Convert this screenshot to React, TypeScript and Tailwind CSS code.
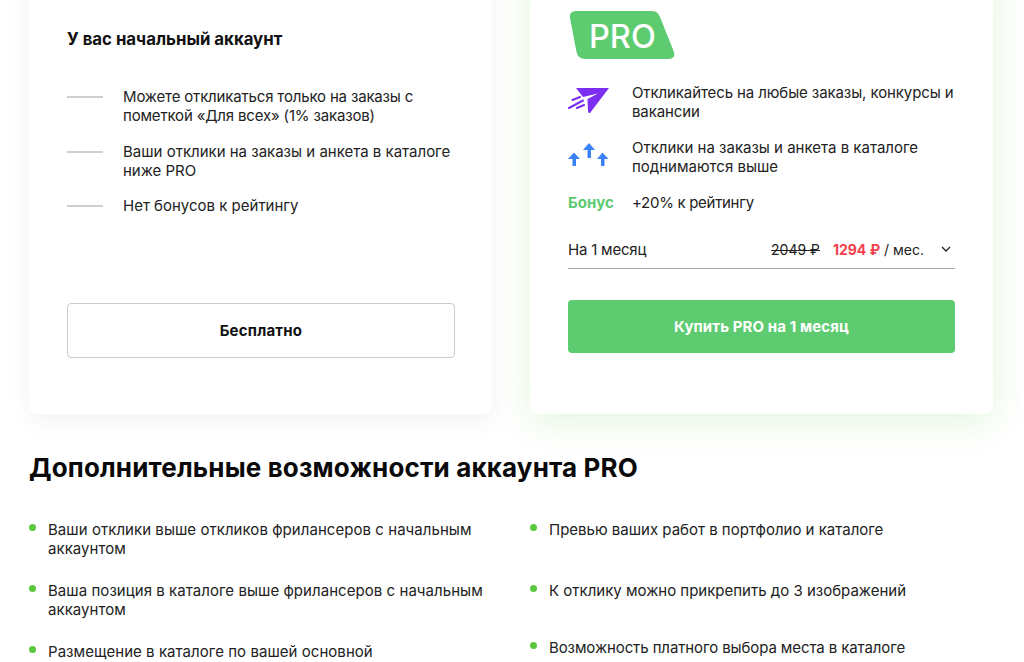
const font = { fontFamily: "Inter, 'Noto Sans', sans-serif" };

function Dash({ children, className = "" }: { children: React.ReactNode; className?: string }) {
  return (
    <li className={`flex items-start ${className}`}>
      <span className="mt-[9px] mr-[20px] h-[2px] w-[36px] shrink-0 bg-[#cfcfcf]" />
      <span className="w-[332px]">{children}</span>
    </li>
  );
}

function Dot({ children, className = "" }: { children: React.ReactNode; className?: string }) {
  return (
    <li className={`flex items-start ${className}`}>
      <span className="mt-[3.5px] mr-[12px] h-[7px] w-[7px] shrink-0 rounded-full bg-[#5ac83c]" />
      <span>{children}</span>
    </li>
  );
}

function Send() {
  return (
    <svg width="42" height="28" viewBox="0 0 42 28" className="mt-[4px] shrink-0">
      <path d="M8 1H41L22 26Q20.500 26.500 20 24.500L19.500 12L30 6.500L15 10Z" fill="#7c2ff0" />
      <path d="M1 21L15 13.500M4.500 13L12 10M9 21L16 18" stroke="#7c2ff0" strokeWidth="2" strokeLinecap="round" fill="none" />
    </svg>
  );
}

function Arrows() {
  return (
    <svg width="42" height="28" viewBox="0 0 42 28" className="mt-[4px] shrink-0" fill="#3b82f6">
      <path d="M6 10.500L12 17H8V24H4.500V17H0Z" />
      <path d="M21 1L27 8H23V16H19.500V8H15Z" />
      <path d="M34.500 10.500L40.500 17H36.500V24H33V17H29Z" />
    </svg>
  );
}

export default function App() {
  return (
    <div className="h-[662px] w-[1024px] overflow-hidden bg-white text-[15px] leading-[19px] text-[#222]" style={font}>
      <div className="-mt-[40px] px-[29px]">
        <div className="flex gap-[38px]">
          <section className="flex h-[454px] w-[463px] flex-col rounded-[8px] bg-white pl-[38px] pr-[37px] pt-[69px] shadow-[0_8px_24px_rgba(0,0,0,0.05)]">
            <h2 className="text-[16.800px] font-bold leading-[20px] text-[#111]">У вас начальный аккаунт</h2>
            <ul className="mt-[38px] flex flex-col">
              <Dash className="tracking-[-0.17px]">Можете откликаться только на заказы с пометкой «Для всех» (1% заказов)</Dash>
              <Dash className="mt-[17px]">Ваши отклики на заказы и анкета в каталоге ниже PRO</Dash>
              <Dash className="mt-[16px]">Нет бонусов к рейтингу</Dash>
            </ul>
            <button className="mt-[88px] h-[55px] w-full rounded-[4px] border border-[#cccccc] bg-white text-[15px] font-bold tracking-[0.2px] text-[#111]">
              Бесплатно
            </button>
          </section>

          <section className="h-[454px] w-[463px] rounded-[8px] bg-white px-[38px] pt-[51px] shadow-[0_8px_36px_rgba(90,200,60,0.17)]">
            <svg width="108" height="49" viewBox="0 0 108 49" className="ml-[1px]">
              <path d="M7 0H83Q89 0 91 6L105 41Q107 48 99 48H16Q9 48 7.500 41L1 7Q0 0 7 0Z" fill="#5dcb70" />
              <text x="20" y="37" fill="#fff" fontSize="32.500" fontWeight="500" style={font}>PRO</text>
            </svg>
            <div className="mt-[23px] flex flex-col gap-[17px]">
              <div className="flex items-start">
                <Send />
                <p className="ml-[22px] w-[323px] tracking-[-0.1px]">Откликайтесь на любые заказы, конкурсы и вакансии</p>
              </div>
              <div className="flex items-start">
                <Arrows />
                <p className="ml-[22px] w-[323px]">Отклики на заказы и анкета в каталоге поднимаются выше</p>
              </div>
              <div className="flex items-center">
                <span className="w-[64px] font-bold text-[#5dcb70]">Бонус</span>
                <span className="tracking-[-0.3px]">+20% к рейтингу</span>
              </div>
            </div>
            <div className="mt-[28px] flex h-[29px] items-center justify-between border-b border-[#a8a8a8] pb-[10px]">
              <span className="tracking-[-0.2px]">На 1 месяц</span>
              <div className="flex items-center">
                <span className="text-[14px] line-through">2049 ₽</span>
                <span className="ml-[13px] text-[14px] font-bold text-[#f0414c]">1294 ₽</span>
                <span className="ml-[4px] text-[14px]">/ мес.</span>
                <svg width="10" height="6" viewBox="0 0 10 6" className="ml-[17px] mr-[4px]" fill="none" stroke="#222" strokeWidth="1.300">
                  <path d="M1 1L5 5L9 1" />
                </svg>
              </div>
            </div>
            <button className="mt-[31px] h-[53px] w-full rounded-[4px] bg-[#5dcb70] text-[15px] font-bold tracking-[0.1px] text-white">
              Купить PRO на 1 месяц
            </button>
          </section>
        </div>

        <h2 className="mt-[37px] text-[26px] font-bold leading-[34px] tracking-[0.15px] text-[#0a0a0a]">Дополнительные возможности аккаунта PRO</h2>

        <div className="mt-[35px] flex gap-[38px]">
          <ul className="flex w-[463px] flex-col gap-[23px] tracking-[0.05px]">
            <Dot>Ваши отклики выше откликов фрилансеров с начальным аккаунтом</Dot>
            <Dot>Ваша позиция в каталоге выше фрилансеров с начальным аккаунтом</Dot>
            <Dot>Размещение в каталоге по вашей основной</Dot>
          </ul>
          <ul className="flex w-[463px] flex-col gap-[42px]">
            <Dot>Превью ваших работ в портфолио и каталоге</Dot>
            <Dot>К отклику можно прикрепить до 3 изображений</Dot>
            <Dot className="-mt-[4px] tracking-[-0.1px]">Возможность платного выбора места в каталоге</Dot>
          </ul>
        </div>
      </div>
    </div>
  );
}
